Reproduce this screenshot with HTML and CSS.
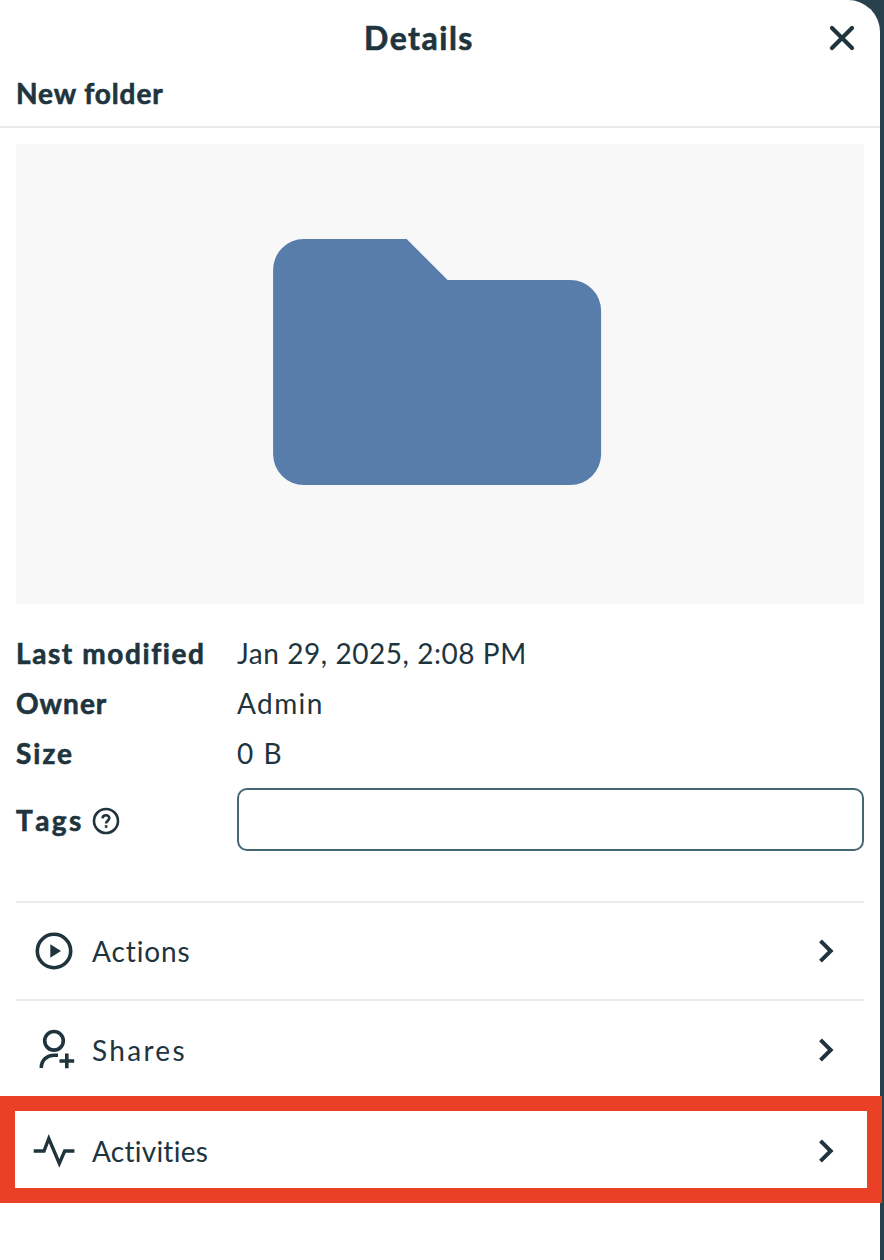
FILE: index.html
```html
<!DOCTYPE html>
<html lang="en">
<head>
<meta charset="utf-8">
<title>Details</title>
<link rel="stylesheet" href="styles.css">
</head>
<body>
<aside class="panel">
  <header class="header">
    <h1 class="title">Details</h1>
    <button class="close" aria-label="Close"><svg width="28" height="28" viewBox="0 0 28 28"><path d="M4 4 24 24M24 4 4 24"/></svg></button>
  </header>
  <div class="resource"><span class="t-name">New folder</span></div>
  <main class="content">
    <div class="preview">
      <svg class="folder" width="329" height="246" viewBox="0 0 329 246"><path transform="translate(.1 0)" d="M30.800 0H133.500L174.500 41H297.200A30.800 30.800 0 0 1 328 71.800V215.200A30.800 30.800 0 0 1 297.200 246H30.800A30.800 30.800 0 0 1 0 215.200V30.800A30.800 30.800 0 0 1 30.800 0Z"/></svg>
    </div>
    <dl class="facts">
      <dt><span class="t-modified">Last modified</span></dt><dd><span class="t-date">Jan 29, 2025, 2:08 PM</span></dd>
      <dt><span class="t-owner">Owner</span></dt><dd><span class="t-admin">Admin</span></dd>
      <dt><span class="t-size">Size</span></dt><dd><span class="t-bytes">0 B</span></dd>
    </dl>
    <div class="tags">
      <label class="tags-label" for="tags"><span class="t-tags">Tags</span>
        <svg class="help" width="28" height="28" viewBox="0 0 28 28"><circle cx="14" cy="14" r="12"/><path d="M10.500 11.300C10.800 7.300 17.300 7.300 17.300 11.100C17.300 13.800 14.100 13.600 14.100 16.600"/><path d="M14.100 18.200V20.800"/></svg>
      </label>
      <input class="tags-input" id="tags" type="text">
    </div>
    <nav class="menu">
      <a class="item actions"><svg class="icon" width="44" height="44" viewBox="0 0 44 44"><circle cx="22" cy="22" r="16.700"/><path class="solid" d="M18.300 15.300 29 22 18.300 28.700Z"/></svg><span class="t-actions">Actions</span><svg class="chevron" width="20" height="28" viewBox="0 0 20 28"><path d="M5.500 3.800 15.700 14 5.500 24.200"/></svg></a>
      <a class="item shares"><svg class="icon" width="44" height="44" viewBox="0 0 44 44"><circle cx="22" cy="12.800" r="9.300"/><path d="M9.300 40C9.300 32 15 27.300 22 27.300H26M34.800 25.500V40.200M27.500 33H42.200"/></svg><span class="t-shares">Shares</span><svg class="chevron" width="20" height="28" viewBox="0 0 20 28"><path d="M5.500 3.800 15.700 14 5.500 24.200"/></svg></a>
      <a class="item activities"><svg class="icon pulse" width="44" height="44" viewBox="0 0 44 44"><path d="M1.700 22H12L16.800 9.500 27.300 34.500 32.700 22H42.400"/></svg><span class="t-activities">Activities</span><svg class="chevron" width="20" height="28" viewBox="0 0 20 28"><path d="M5.500 3.800 15.700 14 5.500 24.200"/></svg></a>
    </nav>
  </main>
</aside>
</body>
</html>
```
FILE: styles.css
```css
* { box-sizing: border-box; }
body { margin: 0; background: #29414d; font-family: Lato, "Open Sans", sans-serif; font-size: 28px; line-height: 36px; color: #20343e; overflow: hidden; font-variant-ligatures: none; }
.panel { width: 880px; height: 1260px; background: #fff; border-radius: 0 32px 0 0; }
.header { height: 76px; display: grid; grid-template-columns: 76px 1fr 76px; align-items: center; }
.title { grid-column: 2; margin: 0; padding-right: 42px; text-align: center; font-size: 32px; font-weight: 700; line-height: 40px; letter-spacing: 1.5px; }
.title, .resource, dt, .t-tags { -webkit-text-stroke: 0.6px currentColor; }
.close { border: 0; background: none; padding: 0; justify-self: center; height: 28px; }
svg { display: block; flex: none; fill: none; stroke: currentColor; }
.close svg { color: #20343e; stroke-width: 4.2; stroke-linecap: round; }
.resource { height: 52px; padding: 0 16px; border-bottom: 2px solid #ebebeb; font-weight: 700; line-height: 34px; }
.content { padding: 16px; }
.preview { height: 460px; background: #f8f8f8; display: flex; justify-content: center; align-items: center; padding: 0 5px 24px 0; }
.folder { fill: #587dab; stroke: none; }
.facts { display: grid; grid-template-columns: 221px 1fr; grid-auto-rows: 50px; align-items: center; margin: 24px 0 10px; }
dt { font-weight: 700; }
dd { margin: 0; }
.tags { display: grid; grid-template-columns: 221px 1fr; align-items: center; }
.tags-label { display: flex; align-items: center; gap: 8px; font-weight: 700; }
.help { stroke-width: 2.6; margin-top: 2px; }
.tags-input { width: 100%; height: 63px; border: 2px solid #456774; border-radius: 10px; background: #fff; }
.menu { margin-top: 50px; }
.item { display: flex; align-items: center; border-top: 2px solid #ebebeb; padding: 0 29px 0 16px; height: 98px; }
.shares { height: 100px; }
.icon { margin-right: 16px; stroke-width: 3.6; }
.solid { fill: currentColor; stroke: none; }
.pulse { stroke-width: 3.4; }
.chevron { margin-left: auto; stroke-width: 4; }
.activities { margin: -3px -18px 0 -16px; height: 107px; border: 15px solid #ea4025; padding: 2px 32px 0 17px; background: #fff; }

/* Tracking per label */
.t-name { letter-spacing: 0.9px; }
.t-modified { letter-spacing: 1.6px; }
.t-owner { letter-spacing: 1px; }
.t-size { letter-spacing: 2px; }
.t-tags { letter-spacing: 2.4px; font-kerning: none; }
.t-date { letter-spacing: 0.55px; }
.t-admin { letter-spacing: 1.4px; }
.t-bytes { letter-spacing: 1.6px; }
.t-actions { letter-spacing: 0.9px; }
.t-shares { letter-spacing: 2.3px; }
.t-activities { letter-spacing: 0.25px; }
```
